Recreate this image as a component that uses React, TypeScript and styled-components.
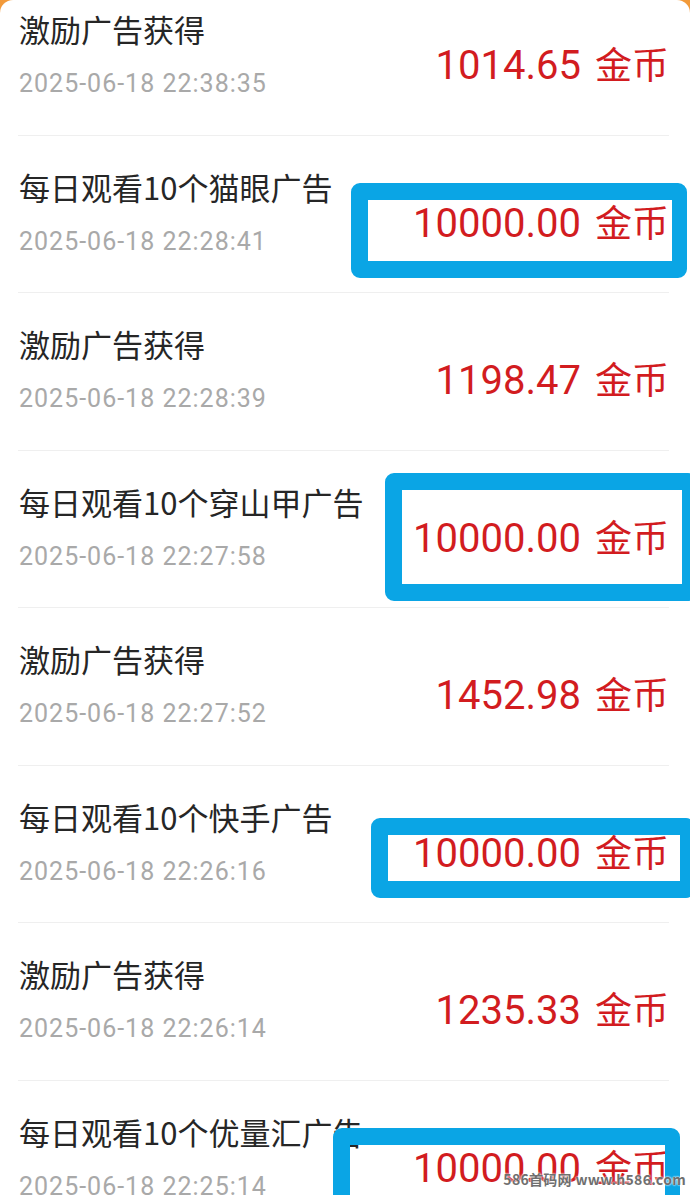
import React from "react";
import styled, { createGlobalStyle } from "styled-components";

type Record = {
  title: string;
  time: string;
  amount: string;
  mark?: { left: number; top: number; width: number; height: number };
};

const records: Record[] = [
  { title: "激励广告获得", time: "2025-06-18 22:38:35", amount: "1014.65" },
  {
    title: "每日观看10个猫眼广告",
    time: "2025-06-18 22:28:41",
    amount: "10000.00",
    mark: { left: 333, top: 47, width: 336, height: 95 },
  },
  { title: "激励广告获得", time: "2025-06-18 22:28:39", amount: "1198.47" },
  {
    title: "每日观看10个穿山甲广告",
    time: "2025-06-18 22:27:58",
    amount: "10000.00",
    mark: { left: 367, top: 22, width: 312, height: 128 },
  },
  { title: "激励广告获得", time: "2025-06-18 22:27:52", amount: "1452.98" },
  {
    title: "每日观看10个快手广告",
    time: "2025-06-18 22:26:16",
    amount: "10000.00",
    mark: { left: 353, top: 52, width: 324, height: 80 },
  },
  { title: "激励广告获得", time: "2025-06-18 22:26:14", amount: "1235.33" },
  {
    title: "每日观看10个优量汇广告",
    time: "2025-06-18 22:25:14",
    amount: "10000.00",
    mark: { left: 315, top: 47, width: 347, height: 130 },
  },
];

export default function App() {
  return (
    <Page>
      <GlobalStyle />
      <Card>
        <RecordList>
          {records.map((r, i) => (
            <Item key={i}>
              <Info>
                <Title>{r.title}</Title>
                <Time>{r.time}</Time>
              </Info>
              <Amount>
                <Num>{r.amount}</Num>
                <Unit>金币</Unit>
              </Amount>
              {r.mark && (
                <Highlight
                  style={{
                    left: r.mark.left,
                    top: r.mark.top,
                    width: r.mark.width,
                    height: r.mark.height,
                  }}
                />
              )}
            </Item>
          ))}
        </RecordList>
      </Card>
      <Watermark>586首码网 www.h586.com</Watermark>
    </Page>
  );
}

const GlobalStyle = createGlobalStyle`
  html, body {
    margin: 0;
    padding: 0;
    background: #f29a3a;
  }
  * {
    box-sizing: border-box;
  }
`;

const Page = styled.div`
  position: relative;
  height: 100vh;
  overflow: hidden;
  font-family: "Noto Sans CJK SC", "Noto Sans", sans-serif;
`;

const Card = styled.div`
  background: #fff;
  border-radius: 13px 13px 0 0;
  min-height: 100%;
  overflow: hidden;
`;

const RecordList = styled.div`
  margin-top: -22px;
  display: flex;
  flex-direction: column;
`;

const Item = styled.div`
  position: relative;
  height: 157.5px;
  margin: 0 21px 0 18px;
  border-bottom: 1px solid #efefef;
  display: grid;
  grid-template-columns: 1fr auto;
`;

const Info = styled.div`
  display: flex;
  flex-direction: column;
  padding-top: 31px;
  padding-left: 1px;
`;

const Title = styled.div`
  font-size: 31px;
  line-height: 40px;
  color: #262626;
  white-space: nowrap;
`;

const Time = styled.div`
  margin-top: 19px;
  font-family: Roboto, "Noto Sans", sans-serif;
  font-size: 25px;
  line-height: 32px;
  letter-spacing: 1px;
  color: #a9a9a9;
  white-space: nowrap;
`;

const Amount = styled.div`
  padding-top: 62px;
  display: flex;
  align-items: baseline;
  line-height: 46px;
  color: #d21c1f;
  white-space: nowrap;
`;

const Num = styled.span`
  font-family: Roboto, "Noto Sans", sans-serif;
  font-size: 40px;
`;

const Unit = styled.span`
  margin-left: 14px;
  font-size: 37px;
`;

const Highlight = styled.div`
  position: absolute;
  border: 17px solid #0aa5e5;
  border-right-width: 15px;
  border-radius: 9px;
  z-index: 2;
`;

const Watermark = styled.div`
  position: absolute;
  right: 4px;
  bottom: 6px;
  z-index: 3;
  font-size: 14px;
  font-weight: 700;
  color: #6f6f6f;
  letter-spacing: 0.3px;
  text-shadow: 0 0 2px #fff, 0 0 2px #fff;
`;
